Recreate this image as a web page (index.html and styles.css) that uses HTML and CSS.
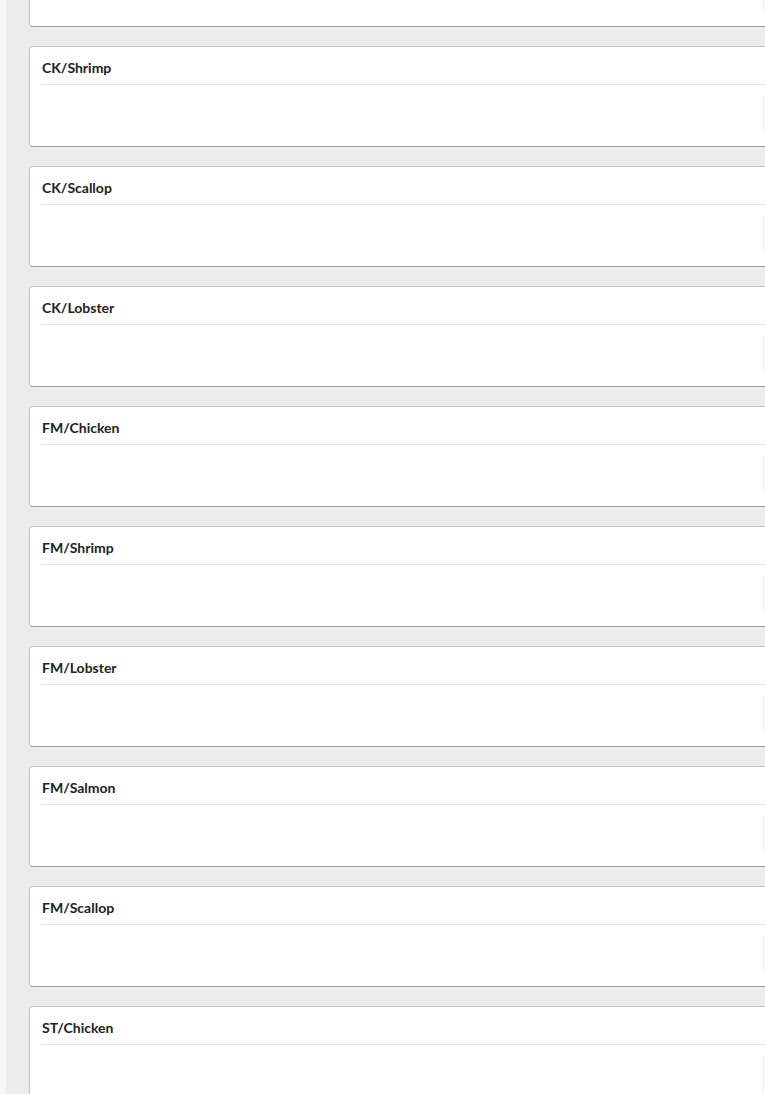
FILE: index.html
```html
<!DOCTYPE html>
<html>
<head>
<meta charset="utf-8">
<link rel="stylesheet" href="styles.css">
</head>
<body>
<div class="page">
  <div class="strip"></div>
  <div class="main">
    <div class="list">
      <div class="card"><div class="card-head"></div><div class="card-body"><div class="field"></div></div></div>
      <div class="card"><div class="card-head">CK/Shrimp</div><div class="card-body"><div class="field"></div></div></div>
      <div class="card"><div class="card-head">CK/Scallop</div><div class="card-body"><div class="field"></div></div></div>
      <div class="card"><div class="card-head">CK/Lobster</div><div class="card-body"><div class="field"></div></div></div>
      <div class="card"><div class="card-head">FM/Chicken</div><div class="card-body"><div class="field"></div></div></div>
      <div class="card"><div class="card-head">FM/Shrimp</div><div class="card-body"><div class="field"></div></div></div>
      <div class="card"><div class="card-head">FM/Lobster</div><div class="card-body"><div class="field"></div></div></div>
      <div class="card"><div class="card-head">FM/Salmon</div><div class="card-body"><div class="field"></div></div></div>
      <div class="card"><div class="card-head">FM/Scallop</div><div class="card-body"><div class="field"></div></div></div>
      <div class="card"><div class="card-head">ST/Chicken</div><div class="card-body"><div class="field"></div></div></div>
    </div>
  </div>
</div>
</body>
</html>
```

FILE: styles.css
```css
html, body {
  margin: 0;
  padding: 0;
  overflow: hidden;
  height: 1094px;
  background: #ececec;
}
.page {
  display: flex;
  width: 1000px;
  height: 1094px;
  font-family: "Lato", "Noto Sans", sans-serif;
}
.strip {
  width: 6px;
  flex: none;
  background: #f8f8f8;
}
.main {
  flex: 1;
  background: #ececec;
  padding-left: 23px;
}
.list {
  display: flex;
  flex-direction: column;
  gap: 19px;
  margin-top: -74px;
}
.card {
  background: #fff;
  border: 1px solid #c6c6c6;
  border-bottom-color: #9d9d9d;
  border-radius: 4px;
  height: 99px;
  box-sizing: content-box;
  display: flex;
  flex-direction: column;
}
.card-head {
  margin: 0 12px;
  padding: 11px 0 6px;
  min-height: 20px;
  line-height: 20px;
  font-size: 14px;
  font-weight: 700;
  color: #222;
  border-bottom: 1px solid #e4e4e4;
}
.card-body {
  flex: 1;
  display: flex;
  align-items: flex-start;
  padding: 11px 0 0 733px;
}
.field {
  width: 200px;
  height: 38px;
  border-left: 1px solid #efefef;
}
```
